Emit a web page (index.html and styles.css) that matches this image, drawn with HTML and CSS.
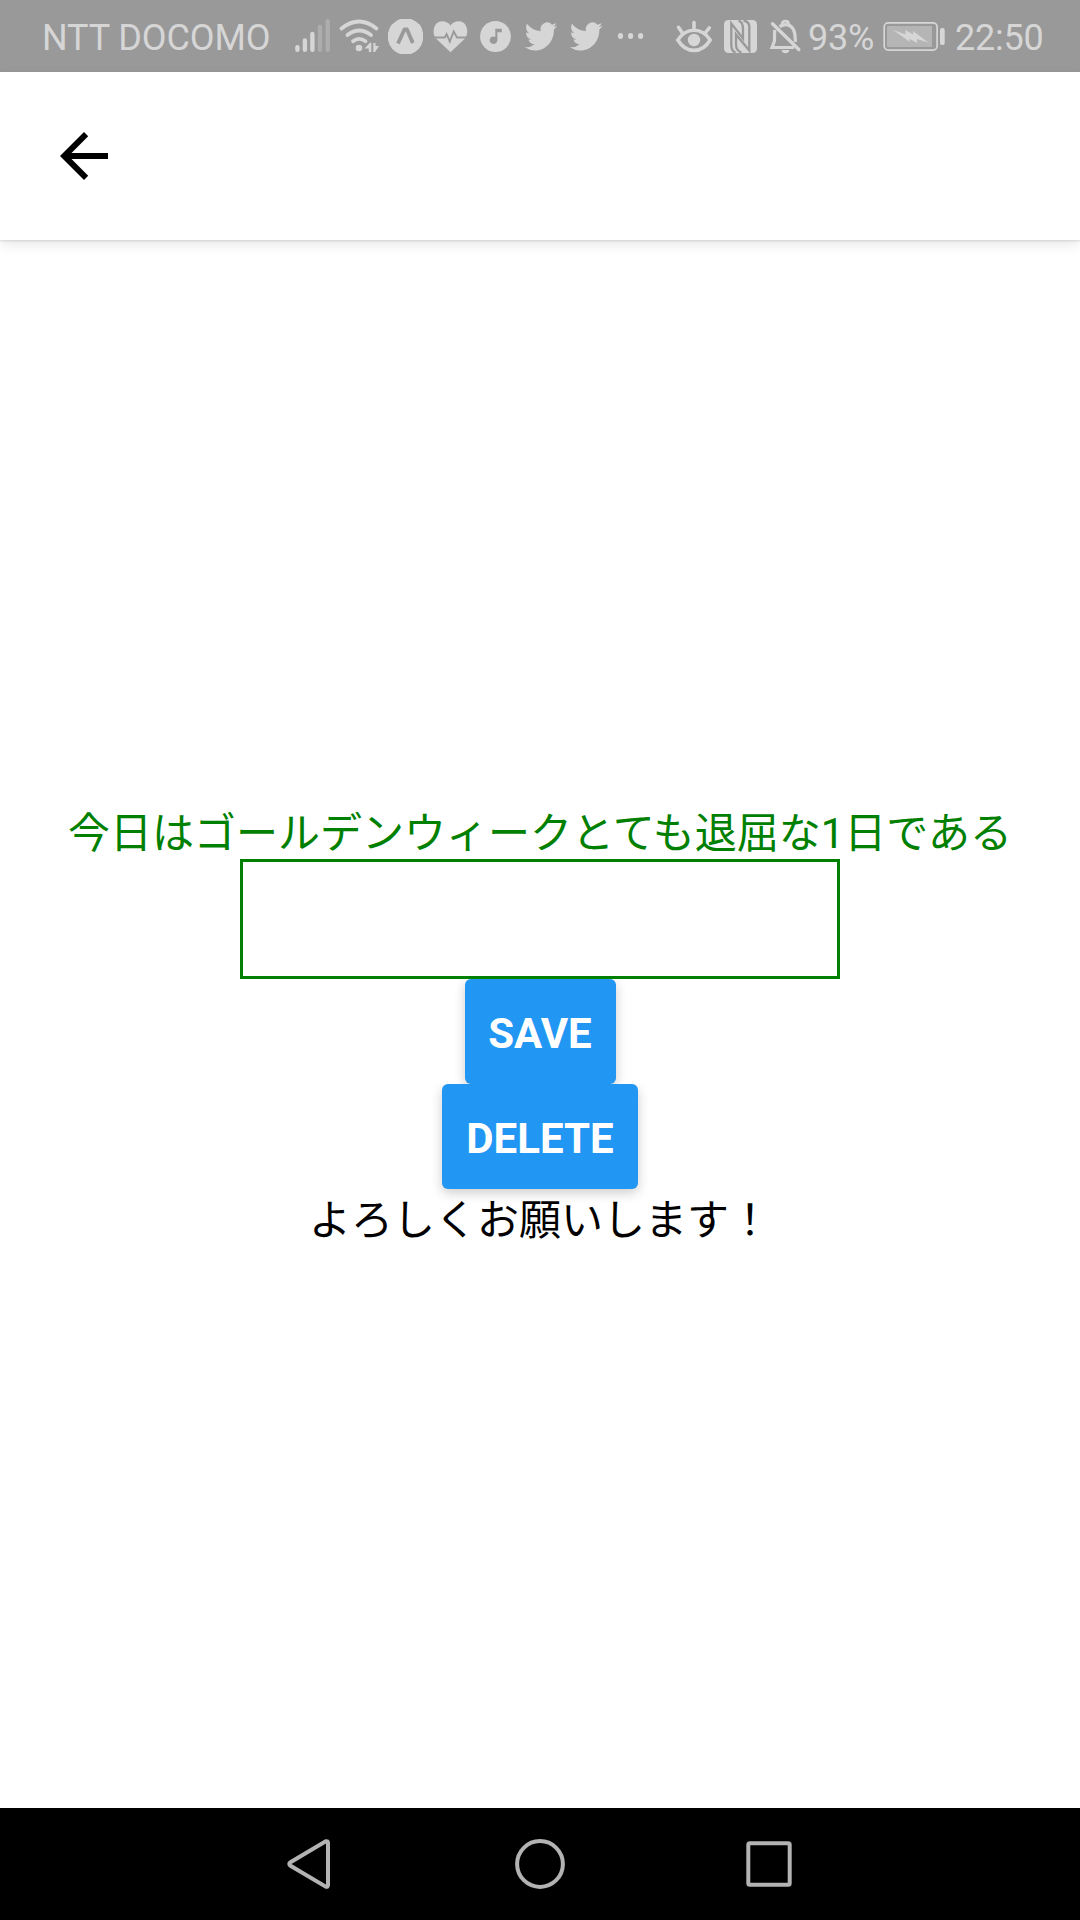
FILE: index.html
```html
<!DOCTYPE html>
<html lang="ja">
<head>
<meta charset="utf-8">
<title>Diary</title>
<link rel="stylesheet" href="styles.css">
</head>
<body>
<div class="screen">
  <div class="status-bar">
    <span class="carrier">NTT DOCOMO</span>
    <svg class="icon" width="50" height="72" viewBox="286 0 50 72"><g stroke="#d6d6d6" stroke-width="4.4" stroke-linecap="round"><path d="M297.4 47.2v2.6M304.9 40.4v9.4M312.4 34v15.8"/><path stroke="#adadad" d="M320 27v22.8M327.7 21.2v28.6"/></g></svg>
    <svg class="icon" width="48" height="72" viewBox="336 0 48 72"><g fill="none" stroke="#d6d6d6" stroke-width="3.8" stroke-linecap="round"><path d="M341.5 28.5Q359 14.5 376.500 28.500M347.500 35Q359 26 371 35M353 41.200Q359 36.500 365.500 41.200"/></g><circle cx="359" cy="48" r="3.300"/><path d="M364.500 48.500L370 42.800H371.300V52H368.800V48.500ZM373.300 43H375.500V46H379L375 52H373.300Z"/></svg>
    <svg class="icon" width="44" height="72" viewBox="384 0 44 72"><path d="M400 19h11q11 4 12 14v7q-2 10-12 14h-11q-10-4-12-14v-7q2-10 12-14z"/><path fill="none" stroke="#999" stroke-width="3.8" stroke-linejoin="round" d="M398 43.500L404.400 29.500H407L412.800 43"/></svg>
    <svg class="icon" width="46" height="72" viewBox="428 0 46 72"><path d="M450.500 52.300L436 38.500C431.500 33.500 433.500 21.200 442 21.200C446 21.200 449 23 450.500 25.500C452 23 455 21.200 459 21.200C467.500 21.200 469.500 33.500 465 38.500Z"/><path fill="none" stroke="#999" stroke-width="1.900" d="M433 37.500H444.800L446.600 34.200L449.800 41.500L453.700 31.500L457 37.500H468.500"/></svg>
    <svg class="icon" width="44" height="72" viewBox="474 0 44 72"><circle cx="495.500" cy="36.500" r="15.400"/><path fill="#999" d="M495.300 28.800H501.800V32.200H497.400V40.500A3.900 3.700 0 1 1 495.300 36.900Z"/></svg>
    <svg class="icon" width="44" height="72" viewBox="518 0 44 72"><path transform="translate(524.800 19.300) scale(1.350 1.430)" d="M23.950 4.570a10 10 0 0 1-2.820.77 4.960 4.960 0 0 0 2.160-2.720c-.95.550-2 .950-3.130 1.180a4.920 4.920 0 0 0-8.380 4.480C7.690 8.090 4.070 6.130 1.640 3.160a4.820 4.820 0 0 0-.67 2.480c0 1.710.87 3.210 2.190 4.100a4.900 4.900 0 0 1-2.230-.62v.06a4.920 4.920 0 0 0 3.950 4.830 5 5 0 0 1-2.210.08 4.940 4.940 0 0 0 4.600 3.420A9.870 9.870 0 0 1 0 19.540a14 14 0 0 0 7.550 2.210c9.050 0 14-7.500 14-13.990 0-.21 0-.42-.02-.63a9.940 9.940 0 0 0 2.460-2.550z"/></svg>
    <svg class="icon" width="46" height="72" viewBox="562 0 46 72"><path transform="translate(569.800 19.300) scale(1.370 1.430)" d="M23.950 4.570a10 10 0 0 1-2.820.77 4.960 4.960 0 0 0 2.160-2.720c-.95.550-2 .950-3.130 1.180a4.920 4.920 0 0 0-8.380 4.480C7.690 8.090 4.070 6.130 1.640 3.160a4.820 4.820 0 0 0-.67 2.480c0 1.710.87 3.210 2.190 4.100a4.900 4.900 0 0 1-2.230-.62v.06a4.920 4.920 0 0 0 3.950 4.830 5 5 0 0 1-2.210.08 4.940 4.940 0 0 0 4.600 3.420A9.870 9.870 0 0 1 0 19.540a14 14 0 0 0 7.550 2.210c9.050 0 14-7.500 14-13.990 0-.21 0-.42-.02-.63a9.940 9.940 0 0 0 2.460-2.550z"/></svg>
    <svg class="icon" width="52" height="72" viewBox="608 0 52 72"><ellipse cx="620.500" cy="36" rx="2.600" ry="3"/><ellipse cx="630.600" cy="36" rx="2.600" ry="3"/><ellipse cx="640.600" cy="36" rx="2.600" ry="3"/></svg>
    <svg class="icon" width="58" height="72" viewBox="660 0 58 72"><g fill="none" stroke="#d6d6d6" stroke-width="3.600" stroke-linecap="round"><path d="M677.800 40C686 27 702 27 710.200 40C702 53.800 686 53.800 677.800 40ZM678.500 27.300L681.700 32M694 22.500V28M709.300 27.800L706 32"/></g><circle cx="694" cy="40" r="6.200"/></svg>
    <svg class="icon" width="46" height="72" viewBox="718 0 46 72"><rect x="724" y="20" width="33" height="33" rx="4.500"/><g fill="none" stroke="#999" stroke-width="2.300"><path d="M735.500 52.500Q731.300 51 731.300 45V23.500L743 38.500V29Q743 22 738.500 20.500"/><path d="M743.500 20.500Q749.300 21.500 749.300 27V50.500L736 34.500V44Q736 51 741.500 52.500"/></g></svg>
    <svg class="icon" width="42" height="72" viewBox="764 0 42 72"><g fill="none" stroke="#d6d6d6" stroke-width="3.200"><path d="M774.800 30Q774.500 33 774.500 41L772 47.500H794M779.500 26.500Q788 22 792.500 28Q795.500 32 795.300 42"/><path stroke-width="3.400" stroke-linecap="round" d="M772.500 23.800L798.800 49.500"/><path stroke-width="2.800" d="M782.300 25.500V23.500Q782.500 21.200 785.500 21.200T788.500 24V26"/></g><path d="M781.500 50H789.500Q788.500 53.200 785.500 53.200T781.500 50Z"/></svg>
    <span class="charge">93%</span>
    <svg class="icon" width="72" height="72" viewBox="878 0 72 72"><rect x="884.200" y="22.900" width="52.900" height="27.200" rx="4" fill="none" stroke="#d6d6d6" stroke-width="1.700"/><rect x="887" y="26" width="45" height="21" rx="1" fill="#b5b5b5"/><path d="M892.800 29.800L905.500 34.500V30L913 34.500V31L928.500 42.800L917 39V43L909.500 38.800V41.800Z"/><rect x="940" y="28" width="4.700" height="17" rx="2"/></svg>
    <span class="clock">22:50</span>
  </div>
  <header class="header">
    <svg class="back" width="48" height="48" viewBox="0 0 48 48"><path d="M0 24L24 0L28.200 4.200L11.500 21H48V27H11.500L28.200 43.800L24 48Z"/></svg>
  </header>
  <main class="content">
    <p class="line entry">今日はゴールデンウィークとても退屈な1日である</p>
    <input class="field" type="text" aria-label="diary">
    <button class="button save">SAVE</button>
    <button class="button delete">DELETE</button>
    <p class="line greeting">よろしくお願いします！</p>
  </main>
  <nav class="nav-bar">
    <svg width="230" height="112" viewBox="195 0 230 112"><path d="M325.800 33.300L290.500 54.200Q288 56 290.500 57.800L325.800 78.700Q328 79.300 328 77V35Q328 32.700 325.800 33.300Z"/></svg>
    <svg width="230" height="112" viewBox="425 0 230 112"><circle cx="540" cy="56" r="22.900"/></svg>
    <svg width="230" height="112" viewBox="655 0 230 112"><rect x="748.300" y="35.300" width="41.400" height="41.400" rx="1.500"/></svg>
  </nav>
</div>
</body>
</html>
```
FILE: styles.css
```css
* {
  box-sizing: border-box;
}

body {
  margin: 0;
  background: #fff;
  font-family: Roboto, "Noto Sans CJK JP", sans-serif;
}

.screen {
  display: flex;
  flex-direction: column;
  width: 1080px;
  height: 1920px;
  overflow: hidden;
}

.status-bar {
  display: flex;
  flex: none;
  height: 72px;
  background: #999;
  color: #d6d6d6;
  font-size: 36px;
  line-height: 76px;
  white-space: nowrap;
}

.icon {
  display: block;
  flex: none;
  fill: #d6d6d6;
}

.carrier {
  flex: 0 0 286px;
  padding-left: 42px;
  letter-spacing: -0.1px;
}

.charge {
  flex: 0 0 72px;
  padding-left: 2px;
  letter-spacing: -0.2px;
}

.clock {
  flex: 0 0 130px;
  padding-left: 5px;
  letter-spacing: -0.2px;
}

.header {
  display: flex;
  align-items: center;
  flex: 0 0 168px;
  padding-left: 60px;
  background: #fff;
  box-shadow: 0 1px 2px rgba(0, 0, 0, 0.12), 0 5px 12px rgba(0, 0, 0, 0.09);
}

.back {
  display: block;
}

.content {
  display: flex;
  flex: 1;
  flex-direction: column;
  align-items: center;
  justify-content: center;
}

.line {
  height: 57px;
  margin: 0;
  font-size: 42px;
  line-height: 63px;
  white-space: nowrap;
}

.entry {
  color: #008000;
}

.greeting {
  z-index: 1;
  color: #000;
}

.field {
  width: 600px;
  height: 120px;
  padding: 0 12px;
  border: 3px solid #008000;
  border-radius: 0;
  background: #fff;
  font-size: 42px;
  outline: none;
}

.button {
  height: 105px;
  padding: 4px 0 0;
  border: 0;
  border-radius: 6px;
  background: #2196f3;
  box-shadow: 0 4px 12px rgba(0, 0, 0, 0.2);
  clip-path: inset(0 -20px -24px);
  color: #fff;
  font-family: Roboto, sans-serif;
  font-size: 42px;
  font-weight: 700;
}

.save {
  width: 151px;
}

.delete {
  width: 196px;
}

.nav-bar {
  display: flex;
  justify-content: center;
  flex: 0 0 112px;
  background: #000;
}

.nav-bar svg {
  display: block;
  fill: none;
  stroke: #b3b3b3;
  stroke-width: 4;
}
```
